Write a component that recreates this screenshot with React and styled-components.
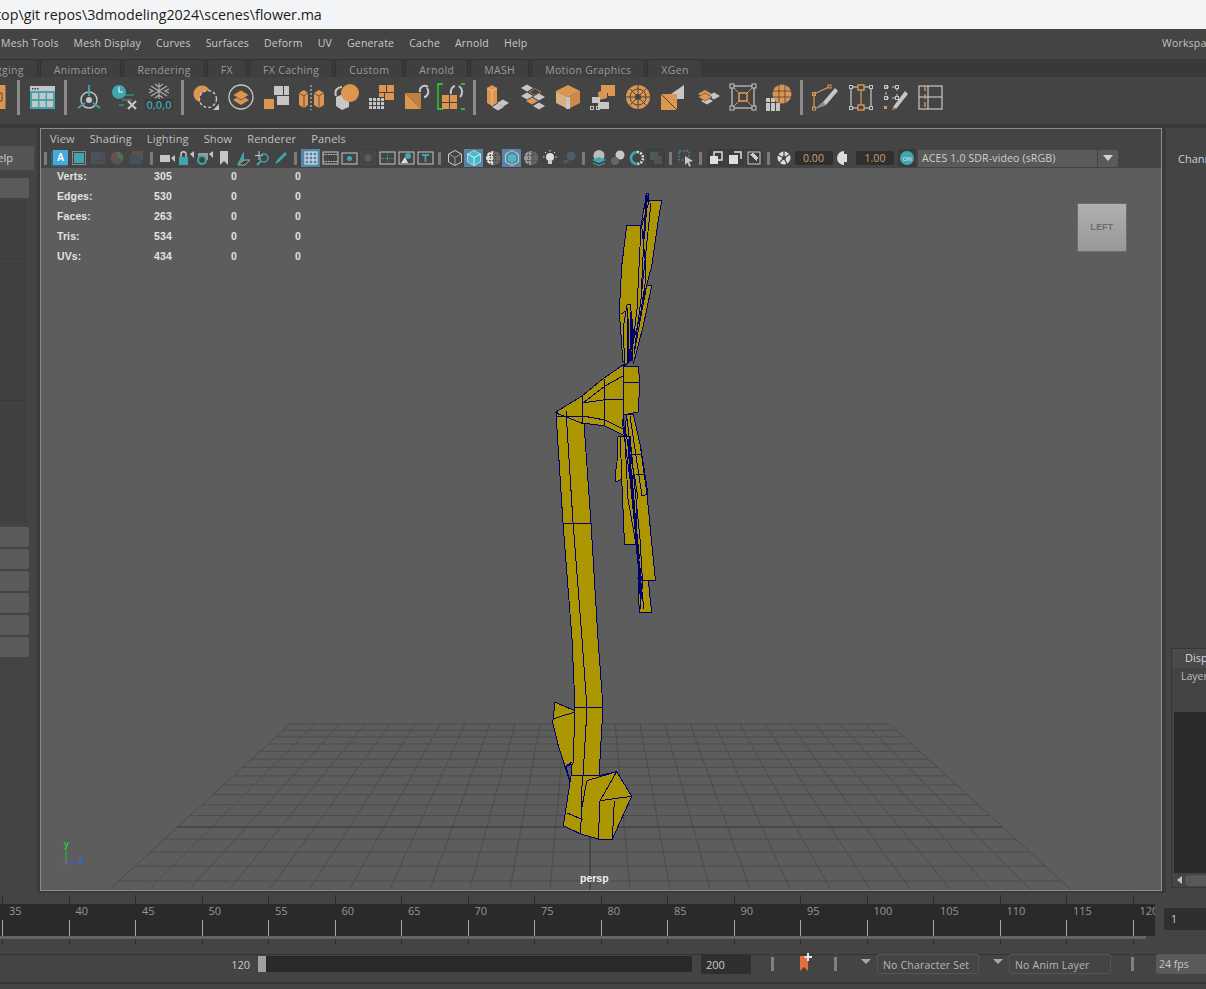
import React from 'react'
import styled, { createGlobalStyle } from 'styled-components'

const O = '#dd9650'
const G = '#c6c6c6'
const T = '#3fa6b0'
const EDGE = '#000070'
const FILL = '#ac9600'

const GlobalStyle = createGlobalStyle`
  html, body { margin: 0; padding: 0; background: #444; }
  * { box-sizing: border-box; }
`

const Page = styled.div`
  width: 1206px;
  height: 989px;
  overflow: hidden;
  display: flex;
  flex-direction: column;
  background: #444;
  color: #c8c8c8;
  font-family: 'Open Sans', 'Noto Sans', sans-serif;
  font-size: 10.5px;
`
const TitleBar = styled.div`
  height: 29px;
  flex: none;
  background: #f3f4f6;
  color: #1c1c1c;
  font-size: 14.3px;
  line-height: 29px;
  white-space: nowrap;
  overflow: hidden;
  span { margin-left: -4px; display: inline-block; }
`
const MenuBar = styled.div`
  height: 30px;
  flex: none;
  display: flex;
  align-items: center;
  gap: 15px;
  padding: 0 0 2px 1px;
  letter-spacing: 0.2px;
  white-space: nowrap;
`
const MenuEnd = styled.span`
  margin-left: auto;
  width: 44px;
  overflow: hidden;
  color: #c0c0c0;
`
const TabRow = styled.div`
  height: 18px;
  flex: none;
  display: flex;
  gap: 2px;
  background: #393939;
  color: #9a9a9a;
  overflow: hidden;
  margin-left: -28px;
`
const Tab = styled.div`
  padding: 1px 13px 0;
  line-height: 18px;
  background: #3f3f3f;
  border: 1px solid #333;
  border-bottom: 0;
  border-radius: 3px 3px 0 0;
  white-space: nowrap;
  letter-spacing: 0.35px;
`
const Shelf = styled.div`
  height: 47px;
  flex: none;
  display: flex;
  align-items: center;
  padding-bottom: 7px;
  background: #444;
`
const ShelfIcon = styled.div`
  width: 35px;
  height: 30px;
  flex: none;
  display: flex;
  align-items: center;
  justify-content: center;
`
const ShelfStub = styled.div`
  width: 12px;
  height: 24px;
  flex: none;
  overflow: hidden;
  svg { display: block; }
`
const ShelfSep = styled.div`
  width: 12px;
  flex: none;
  display: flex;
  justify-content: center;
  &::after { content: ''; width: 3px; height: 35px; background: #8c8c8c; }
`
const Gutter = styled.div`
  height: 4px;
  flex: none;
  background: #393939;
`
const Main = styled.div`
  height: 765px;
  flex: none;
  display: flex;
  background: #3a3a3a;
`
const LeftPanel = styled.div`
  width: 37px;
  flex: none;
  display: flex;
  flex-direction: column;
  background: #444;
`
const LeftTab = styled.div`
  width: 34px;
  height: 24px;
  margin-top: 18px;
  flex: none;
  display: flex;
  justify-content: flex-end;
  padding-right: 21px;
  background: #555;
  color: #d0d0d0;
  font-size: 11px;
  line-height: 24px;
  white-space: nowrap;
  overflow: hidden;
  border-radius: 0 2px 2px 0;
`
const LeftButton = styled.div`
  width: 29px;
  height: 20px;
  flex: none;
  margin-top: ${p => p.$mt || 0}px;
  margin-bottom: 2px;
  background: #5a5a5a;
  border-radius: 0 2px 2px 0;
`
const LeftList = styled.div`
  width: 27px;
  height: 323px;
  flex: none;
  margin: 0 0 4px;
  display: flex;
  flex-direction: column;
  background: #404040;
`
const LeftListPart = styled.div`
  height: ${p => p.$h}px;
  flex: none;
  border-bottom: 1px solid #3a3a3a;
`
const Viewport = styled.div`
  width: 1122px;
  height: 763px;
  flex: none;
  margin-left: 3px;
  border: 1px solid #8c8c8c;
  display: flex;
  flex-direction: column;
`
const PanelMenu = styled.div`
  height: 19px;
  flex: none;
  display: flex;
  align-items: center;
  gap: 15px;
  padding-left: 9px;
  background: #444;
  color: #c0c0c0;
  font-size: 11px;
  letter-spacing: 0.15px;
`
const PanelBar = styled.div`
  height: 20px;
  flex: none;
  display: flex;
  align-items: center;
  background: #444;
`
const PanelIcon = styled.div`
  width: 19px;
  height: 18px;
  flex: none;
  display: flex;
  align-items: center;
  justify-content: center;
  background: ${p => (p.$on ? '#5285a6' : 'transparent')};
`
const PanelSep = styled.div`
  width: ${p => p.$w || 11}px;
  flex: none;
  display: flex;
  justify-content: center;
  &::after { content: ''; width: 3px; height: 13px; background: #7c7c7c; border-radius: 1px; }
`
const NumBox = styled.div`
  width: 38px;
  height: 14px;
  flex: none;
  margin: 0 ${p => p.$mr || 0}px 0 ${p => p.$ml}px;
  background: #2f2f2f;
  color: #d0a060;
  border-radius: 2px;
  text-align: center;
  line-height: 14px;
  font-size: 10.5px;
`
const ColorBox = styled.div`
  width: 179px;
  height: 17px;
  flex: none;
  margin-left: 2px;
  background: #5a5a5a;
  color: #d0d0d0;
  line-height: 17px;
  padding-left: 4px;
  letter-spacing: 0.15px;
  white-space: nowrap;
`
const ColorArrow = styled.div`
  width: 20px;
  height: 17px;
  flex: none;
  margin-left: 1px;
  background: #5a5a5a;
  display: flex;
  align-items: center;
  justify-content: center;
  border-radius: 0 2px 2px 0;
  &::after {
    content: '';
    border-left: 5px solid transparent;
    border-right: 5px solid transparent;
    border-top: 6px solid #d4d4d4;
  }
`
const Scene = styled.div`
  position: relative;
  flex: 1;
  background: #5d5d5d;
  overflow: hidden;
  svg.canvas { display: block; }
`
const Stats = styled.div`
  position: absolute;
  left: 16px;
  top: 0;
  display: grid;
  grid-template-columns: 97px 77px 64px 10px;
  grid-auto-rows: 20px;
  font-family: 'Liberation Sans', Arial, sans-serif;
  font-weight: 700;
  font-size: 10.5px;
  letter-spacing: 0.1px;
  line-height: 17px;
  color: #e2e2e2;
`
const ViewCube = styled.div`
  position: absolute;
  left: 1036px;
  top: 35px;
  width: 50px;
  height: 49px;
  background: linear-gradient(#b0b0b0, #989898);
  border: 1px solid #6c6c6c;
  color: #6a6a6a;
  font-family: 'Liberation Sans', Arial, sans-serif;
  font-weight: 700;
  font-size: 8.5px;
  letter-spacing: 0.4px;
  line-height: 46px;
  text-align: center;
`
const Persp = styled.div`
  position: absolute;
  left: 539px;
  top: 704px;
  font-family: 'Liberation Sans', Arial, sans-serif;
  font-weight: 700;
  font-size: 10.5px;
  color: #f0f0f0;
`
const Axis = styled.svg`
  position: absolute;
  left: 20px;
  top: 671px;
`
const RightPanel = styled.div`
  flex: 1;
  margin-left: 3px;
  background: #444;
  border-left: 1px solid #3a3a3a;
  display: flex;
  flex-direction: column;
  min-width: 0;
`
const Channel = styled.div`
  height: 520px;
  flex: none;
  padding: 23px 0 0 12px;
  color: #cfcfcf;
  font-size: 11px;
  white-space: nowrap;
  overflow: hidden;
`
const LayerFrame = styled.div`
  height: 240px;
  flex: none;
  margin-left: 5px;
  border: 1px solid #383838;
  border-right: 0;
  display: flex;
  flex-direction: column;
  overflow: hidden;
  white-space: nowrap;
`
const LayerTab = styled.div`
  height: 19px;
  flex: none;
  padding: 1px 0 0 13px;
  background: #4a4a4a;
  font-size: 11px;
  color: #d8d8d8;
`
const LayerMenu = styled.div`
  height: 44px;
  flex: none;
  padding: 1px 0 0 9px;
  color: #bcbcbc;
`
const LayerList = styled.div`
  height: 161px;
  flex: none;
  margin-left: 2px;
  background: #2a2a2a;
`
const LayerScroll = styled.div`
  flex: 1;
  display: flex;
  align-items: center;
  padding-left: 5px;
  gap: 3px;
  &::before {
    content: '';
    border-top: 4px solid transparent;
    border-bottom: 4px solid transparent;
    border-right: 5px solid #c0c0c0;
  }
  &::after { content: ''; flex: 1; height: 11px; background: #585858; border-radius: 4px 0 0 4px; }
`
const Timeline = styled.div`
  height: 51px;
  flex: none;
  margin-top: 2px;
  display: flex;
  flex-direction: column;
  position: relative;
  background: #444;
`
const TickRow = styled.div`
  height: ${p => p.$h}px;
  flex: none;
  display: flex;
  padding-left: 2px;
  overflow: hidden;
  width: ${p => p.$w}px;
  background: ${p => p.$bg};
  border-top: ${p => p.$top || 'none'};
`
const TickCell = styled.div`
  width: 66.5px;
  flex: none;
  border-left: 1px solid #2a2a2a;
`
const RulerCell = styled.div`
  width: 66.5px;
  flex: none;
  display: flex;
  flex-direction: column;
  color: #969696;
  font-size: 11px;
  line-height: 14px;
`
const RulerLabel = styled.div`
  height: 16px;
  padding-left: 7px;
`
const RulerTick = styled.div`
  width: 1px;
  height: 16px;
  background: #a8a8a8;
`
const CurrentFrame = styled.div`
  position: absolute;
  left: 1164px;
  top: 13px;
  width: 42px;
  height: 22px;
  background: #2f2f2f;
  border-radius: 2px 0 0 2px;
  padding-left: 7px;
  line-height: 22px;
  color: #c8c8c8;
`
const RangeRow = styled.div`
  height: 30px;
  flex: none;
  margin-top: 8px;
  padding-top: 1px;
  display: flex;
  align-items: flex-start;
  background: #444;
  border-top: 1px solid #333;
  border-bottom: 2px solid #353535;
`
const RangeFill = styled.div`
  width: 258px;
  height: 16px;
  flex: none;
  line-height: 17px;
  text-align: right;
  padding-right: 8px;
  font-size: 11px;
  color: #c8c8c8;
`
const RangeHandle = styled.div`
  width: 8px;
  height: 16px;
  flex: none;
  background: #a0a0a0;
`
const RangeTrack = styled.div`
  width: 426px;
  height: 16px;
  flex: none;
  background: #2a2a2a;
`
const EndField = styled.div`
  width: 50px;
  height: 20px;
  flex: none;
  margin: -2px 20px 0 9px;
  background: #2f2f2f;
  border-radius: 2px;
  padding-left: 5px;
  line-height: 21px;
  font-size: 11px;
`
const Pill = styled.div`
  width: 3px;
  height: 20px;
  flex: none;
  margin: -2px ${p => p.$mr || 0}px 0 ${p => p.$ml || 0}px;
  background: linear-gradient(#444 0, #444 3px, #808080 3px, #808080 17px, #444 17px);
`
const Bookmark = styled.svg`
  flex: none;
  margin: -3px 21px 0 0;
`
const Caret = styled.div`
  width: 0;
  height: 0;
  flex: none;
  margin: 3px 6px 0 ${p => p.$ml}px;
  border-left: 5px solid transparent;
  border-right: 5px solid transparent;
  border-top: 5px solid #a8a8a8;
`
const SetField = styled.div`
  width: 102px;
  height: 20px;
  flex: none;
  margin-top: -2px;
  border: 1px solid #555;
  border-radius: 2px;
  padding-left: 5px;
  line-height: 20px;
  letter-spacing: 0.2px;
  white-space: nowrap;
  color: #b8b8b8;
`
const FpsField = styled.div`
  flex: 1;
  height: 20px;
  margin: -2px 0 0 22px;
  background: #5a5a5a;
  border-radius: 2px 0 0 2px;
  padding-left: 3px;
  line-height: 21px;
  color: #c8c8c8;
`

const Svg = ({ s = 28, children }) => (
  <svg width={s} height={s} viewBox={`0 0 ${s} ${s}`}>
    {children}
  </svg>
)
const P = ({ d, f = O, st = 'none', w = 1, dash }) => (
  <path d={d} fill={f} stroke={st} strokeWidth={w} strokeDasharray={dash} />
)
const Arrow = ({ d }) => <path d={d} fill="none" stroke={G} strokeWidth="2" />
const Dia = ({ x, y, c = G }) => <path d={`M${x - 6} ${y}L${x} ${y - 3.5}L${x + 6} ${y}L${x} ${y + 3.5}Z`} fill={c} />
const Handle = ({ x, y }) => <rect x={x - 1.5} y={y - 1.5} width="3" height="3" fill="none" stroke={G} />

const shelfIcons = [
  <>
    <rect x="2" y="3" width="25" height="23" fill={T} />
    <rect x="2" y="3" width="25" height="5" fill={G} />
    {[4, 6.5, 9].map(x => <rect key={x} x={x} y="5" width="1.5" height="1.5" fill="#444" />)}
    {[4, 11.5, 19].flatMap(x => [10, 18].map(y => <rect key={x + '' + y} x={x} y={y} width="6" height="6" fill={G} />))}
  </>,
  <>
    <circle cx="14" cy="17" r="8" fill="none" stroke={G} strokeWidth="1.4" />
    <circle cx="14" cy="17" r="3" fill={G} />
    <P d="M14 2V13M3 25L10 20M25 25L18 20" st={T} w="1.8" f="none" />
  </>,
  <>
    <circle cx="9" cy="9" r="7" fill={T} />
    <P d="M9 4V9H13" f="none" st="#eee" w="1.2" />
    <P d="M15 12H24M12 17H22M9 22H14" f="none" st={T} w="1.2" />
    <P d="M18 18L26 26M26 18L18 26" f="none" st={G} w="2.2" />
  </>,
  <>
    <P d="M14 0V16M6 3L22 13M22 3L6 13M10 1L14 4L18 1M10 15L14 12L18 15M4 6L8 8L4 10M24 6L20 8L24 10" f="none" st="#b0b0b0" w="1.1" />
    <rect x="0" y="16" width="28" height="11" fill="#3a3a3a" />
    <text x="14" y="25.5" fill={T} fontSize="11" fontWeight="600" textAnchor="middle" fontFamily="'Open Sans', sans-serif">0,0,0</text>
  </>,
  <>
    <circle cx="10" cy="11" r="8.5" fill={O} />
    <circle cx="16" cy="16" r="8.5" fill="#444" stroke={G} strokeWidth="1.4" strokeDasharray="3 2" />
    <P d="M21 27H27V21Z" f={G} />
  </>,
  <>
    <circle cx="14" cy="14" r="12" fill="none" stroke={G} strokeWidth="1.3" />
    <P d="M6 17L14 12L22 17L14 22Z" />
    <P d="M6 12L14 7L22 12L14 17Z" st="#444" w=".7" />
  </>,
  <>
    <rect x="12" y="3" width="9" height="9" fill={G} />
    <rect x="22" y="3" width="5" height="9" fill={G} />
    <rect x="15" y="13" width="12" height="9" fill={G} />
    <rect x="2" y="16" width="10" height="10" fill={O} />
  </>,
  <>
    <P d="M2 10L7 7L11 10V22L7 25L2 22Z" />
    <P d="M17 10L22 7L27 10V22L22 25L17 22Z" />
    <P d="M2 10L7 13V25M11 10L7 13M17 10L22 13V25M27 10L22 13" f="none" st="#444" w=".8" />
    <P d="M14 2V27" f="none" st="#ddd" dash="2 2" />
  </>,
  <>
    <P d="M4 14L11 11L17 17V24L10 27L4 23Z" f={G} />
    <circle cx="18" cy="10" r="9" fill={O} />
    <Arrow d="M4 13C2 7 6 4 10 4" />
  </>,
  <>
    {[2, 6, 10, 14].flatMap(x => [15, 19, 23].map(y => <rect key={x + '-' + y} x={x} y={y} width="3" height="3" fill={G} />))}
    <rect x="12" y="2" width="7" height="7" fill={O} />
    <rect x="20" y="2" width="7" height="7" fill={O} />
    <rect x="18" y="10" width="9" height="7" fill={O} />
    <rect x="12" y="10" width="5" height="4" fill={O} />
  </>,
  <>
    <P d="M3 10L19 26H3Z" />
    <P d="M3 10L19 10L19 26Z" f="#c08040" />
    <Arrow d="M18 9C17 4 22 1 26 4" />
    <Arrow d="M25 5C28 9 25 14 22 14" />
  </>,
  <>
    <P d="M6 1H1V26H6M24 1H29V26H24" f="none" st="#22e322" w="1.3" />
    <rect x="5" y="12" width="7" height="7" fill={O} />
    <rect x="13" y="12" width="7" height="7" fill={O} />
    <rect x="5" y="20" width="7" height="6" fill={O} />
    <rect x="13" y="20" width="7" height="6" fill={O} />
    <Arrow d="M14 11C13 6 16 3 18 3" />
    <Arrow d="M22 3C26 6 26 11 23 14" />
  </>,
  <>
    <P d="M3 5L8 2L13 5V20L8 23L3 20Z" />
    <P d="M3 5L8 8L13 5M8 8V23" f="none" st="#f0c090" />
    <Dia x={19} y={20} />
    <Dia x={14} y={24} />
  </>,
  <>
    <Dia x={8} y={5} />
    <P d="M10 9L16 5.5L22 9L16 12.5Z" f="none" st={O} dash="1.5 1" />
    <Dia x={8} y={13} />
    <Dia x={20} y={14} />
    <Dia x={13} y={18} c={O} />
    <Dia x={20} y={23} />
  </>,
  <>
    <P d="M14 2L26 8L14 14L2 8Z" />
    <P d="M2 8L14 14V26L2 20Z" f="#d8b080" />
    <P d="M26 8L14 14V26L26 20Z" f="#d08a48" />
    <P d="M12 14H16V26H12Z" f={G} />
  </>,
  <>
    <P d="M12 2H26V13H19V10H12Z" />
    <P d="M9 9L18 7V15L10 17Z" />
    <rect x="3" y="14" width="8" height="6" fill={G} />
    <rect x="9" y="19" width="11" height="7" fill={G} />
    <Handle x={3} y={25} />
    <Handle x={9} y={25} />
    <Handle x={5} y={18} />
  </>,
  <>
    <circle cx="14" cy="14" r="12" fill={O} />
    <circle cx="14" cy="14" r="8" fill="none" stroke="#444" strokeWidth="1" />
    <circle cx="14" cy="14" r="3" fill="#444" />
    <P d="M14 2V26M2 14H26M5.5 5.5L22.5 22.5M22.5 5.5L5.5 22.5" f="none" st="#444" w="1" />
  </>,
  <>
    <P d="M12 11L25 2V16H12Z" f={G} />
    <rect x="2" y="11" width="16" height="16" fill={O} />
    <P d="M2 11L18 27" f="none" st="#444" />
  </>,
  <>
    <Dia x={20} y={13} />
    <Dia x={13} y={18} />
    <P d="M4 11L11 7L18 11L11 15Z" />
    <P d="M4 14L11 10L18 14L11 18Z" st="#444" w=".6" />
  </>,
  <>
    <rect x="3" y="3" width="22" height="22" fill="none" stroke={G} strokeWidth="1.2" />
    <rect x="10" y="10" width="8" height="8" fill="none" stroke={O} strokeWidth="1.6" />
    <P d="M4 4L10 10M24 4L18 10M4 24L10 18M24 24L18 18" f="none" st={O} />
    {[[3, 3], [25, 3], [3, 25], [25, 25]].map(([x, y]) => <rect key={x + '' + y} x={x - 2} y={y - 2} width="4" height="4" fill="#444" stroke={G} />)}
  </>,
  <>
    {[2, 7, 12].flatMap(x => [15, 20, 24].map(y => <rect key={x + '-' + y} x={x} y={y} width="4" height="4" fill={G} />))}
    <circle cx="18" cy="11" r="9.5" fill={O} />
    <P d="M8.5 8H27M8.5 14H27M15 2V20M21 2V20" f="none" st="#444" w=".8" />
  </>,
  <>
    <P d="M3 11L18 4M3 11V25" f="none" st={O} w="1.2" />
    <rect x="1.5" y="9.5" width="3" height="3" fill="none" stroke={O} />
    <rect x="17" y="2" width="3" height="3" fill="none" stroke={O} />
    <rect x="1.5" y="24" width="3" height="3" fill="none" stroke={O} />
    <P d="M4 26L12 19L24 5L27 8L15 22Z" f={G} />
    <P d="M4 26L12 19L15 22Z" f="#888" />
  </>,
  <>
    <rect x="5" y="4" width="20" height="21" fill="none" stroke={G} strokeWidth="1.2" />
    <P d="M15 6V22" f="none" st={O} w="1.2" />
    <rect x="12" y="2" width="6" height="5" fill="#444" stroke={O} strokeWidth="1.4" />
    <rect x="12" y="22" width="6" height="5" fill="#444" stroke={O} strokeWidth="1.4" />
    {[[5, 4], [25, 4], [5, 25], [25, 25]].map(([x, y]) => <rect key={x + '' + y} x={x - 1.5} y={y - 1.5} width="3" height="3" fill="#444" stroke={G} />)}
  </>,
  <>
    <rect x="5" y="4" width="11" height="11" fill="none" stroke={G} strokeDasharray="3 3" />
    {[[5, 4], [16, 4], [5, 15], [16, 15]].map(([x, y]) => <Handle key={x + '' + y} x={x} y={y} />)}
    <rect x="3" y="23" width="3" height="3" fill={O} />
    <P d="M12 24L24 8L27 11L15 26Z" f={G} />
    <P d="M12 24L14 27H11Z" f="#888" />
  </>,
  <>
    <rect x="3" y="3" width="23" height="23" fill="none" stroke={G} strokeWidth="1.2" />
    <P d="M3 14H26" f="none" st={G} w="1.2" />
    <P d="M9 3V26" f="none" st={O} w="1.4" dash="5 3" />
    <P d="M12 3V26" f="none" st={G} w="1.2" />
  </>,
]

const panelA = [
  <>
    <rect x="2" y="1" width="15" height="15" fill="#45abdc" />
    <P d="M1 2V17H16" f="none" st="#2f7aa0" />
    <text x="9.5" y="12" fill="#fff" fontSize="10" fontWeight="700" textAnchor="middle" fontFamily="'Liberation Sans', sans-serif">A</text>
  </>,
  <>
    <rect x="4" y="4" width="10" height="10" fill={T} />
    <rect x="2.5" y="2.5" width="13" height="13" fill="none" stroke="#888" />
  </>,
  <>
    <rect x="2" y="3" width="14" height="12" fill="#4a5158" />
    <P d="M5 12H13V5" f="none" st="#3a4046" dash="1 1" />
  </>,
  <>
    <circle cx="9" cy="9" r="6.5" fill="#555" />
    <P d="M9 2.5A6.5 6.5 0 0 1 15 11L9 9Z" f="#5a6a55" />
    <P d="M9 2.5A6.5 6.5 0 0 0 3 11L9 9Z" f="#6a5050" />
  </>,
  <>
    <rect x="5" y="2" width="11" height="9" fill="#5a5248" />
    <rect x="2" y="6" width="12" height="9" fill="#455058" />
  </>,
]
const panelB = [
  <>
    <rect x="2" y="6" width="10" height="7" fill={G} />
    <P d="M13 9L17 6V13Z" f={G} />
  </>,
  <>
    <rect x="2" y="8" width="9" height="8" fill={T} />
    <P d="M4 8V5C4 2 9 2 9 5V8" f="none" st="#ccc" w="1.4" />
    <P d="M13 5L17 2V9Z" f={G} />
  </>,
  <>
    <rect x="2" y="4" width="10" height="7" fill="#999" />
    <circle cx="6" cy="11" r="4" fill="#444" stroke={T} strokeWidth="2" />
    <P d="M13 5L17 2V9Z" f={G} />
  </>,
  <P d="M5 2H13V16L9 12L5 16Z" f={G} />,
  <>
    <P d="M10 2V11L3 16Z" f={T} />
    <P d="M4 16L10 11H16L11 16Z" f="none" st="#aaa" />
  </>,
  <>
    <P d="M6 2V11M2 6.5H10" f="none" st={G} />
    <circle cx="11" cy="9" r="4" fill="none" stroke={T} strokeWidth="1.5" />
    <P d="M8 12L4 16" f="none" st={T} w="2" />
  </>,
  <P d="M3 15L5 11L13 3L15 5L7 13Z" f={T} />,
]
const panelC = [
  { on: true, el: <><rect x="3" y="3" width="12" height="12" fill="none" stroke="#eee" /><P d="M7 3V15M11 3V15M3 7H15M3 11H15" f="none" st="#eee" /></> },
  { el: <><rect x="2" y="3" width="15" height="12" fill="none" stroke={G} /><P d="M2 5.5H17M2 12.5H17" f="none" st={G} dash="1.5 1" /></> },
  { el: <><rect x="2" y="4" width="15" height="11" fill="none" stroke={G} /><circle cx="9.5" cy="9.5" r="2.5" fill={T} /></> },
  { el: <><rect x="0" y="0" width="18" height="18" fill="#464646" stroke="#383838" /><circle cx="9" cy="9" r="3.5" fill="#5c5c5c" /></> },
  { el: <><rect x="2" y="3" width="15" height="12" fill="none" stroke={G} /><P d="M9.5 4V15M3 9.5H16" f="none" st={T} dash="1 1" /></> },
  { el: <><rect x="2" y="3" width="15" height="12" fill="none" stroke={G} /><circle cx="11" cy="7" r="3" fill={T} /><P d="M4 14L8 8L11 14Z" f="#ddd" /></> },
  { el: <><rect x="2" y="3" width="15" height="12" fill="none" stroke={G} /><P d="M6 6H13M9.5 6V13" f="none" st={T} w="1.8" /></> },
]
const cube = c => (
  <>
    <P d="M9 1.5L15.5 5V13L9 16.5L2.5 13V5Z" f={c || 'none'} st="#ccc" />
    <P d="M2.5 5L9 8.5L15.5 5M9 8.5V16.5" f="none" st={c ? '#d8f4f4' : '#999'} />
  </>
)
const checkerBall = half => (
  <>
    <circle cx="9" cy="9" r="7" fill={half ? '#ddd' : '#999'} />
    <P d="M9 2A7 7 0 0 1 9 16Z" f="#666" />
    <P d="M2 6.5H16M2 11.5H16M6.5 2V16M11.5 2V16" f="none" st="#4a4a4a" w="1.2" dash="1.5 1.5" />
  </>
)
const panelD = [
  { el: cube() },
  { on: true, el: cube('#45bccb') },
  { el: checkerBall(true) },
  {
    on: true,
    el: (
      <>
        {cube()}
        <P d="M9 5L13 7V11.5L9 13.5L5 11.5V7Z" f="#50b8c4" />
      </>
    ),
  },
  { el: checkerBall(false) },
  { el: <><circle cx="9" cy="8" r="4" fill="#ddd" /><rect x="7" y="12" width="4" height="3" fill="#ccc" /><P d="M9 1V2.5M2 8H3.5M14.5 8H16M4 3L5 4M14 3L13 4" f="none" st="#ddd" /></> },
  { el: <><circle cx="11" cy="7" r="4.5" fill="#4e5c66" /><P d="M3 12L8 10L9 13L4 15Z" f="#555" /></> },
]
const panelE = [
  <>
    <circle cx="9" cy="6.5" r="5.5" fill="#bbb" />
    <P d="M2 11L9 8L16 11L9 14Z" f={T} />
    <P d="M3 14L9 16.5L15 14" f="none" st={T} />
  </>,
  <>
    <circle cx="11" cy="6" r="4.5" fill="#c8c8c8" />
    <circle cx="6" cy="12" r="4" fill="#666" />
  </>,
  <>
    <P d="M9 3A6 6 0 0 0 9 15" f="none" st={T} w="2.6" />
    <P d="M9 3A6 6 0 0 1 9 15" f="none" st="#ddd" w="2.6" dash="2 1.2" />
  </>,
  <>
    <rect x="0" y="0" width="18" height="18" fill="#404040" stroke="#383838" />
    <rect x="3" y="3" width="8" height="8" fill="#4e5a5c" />
    <rect x="7" y="7" width="8" height="8" fill="#47565a" />
  </>,
]
const overlap = (a, b) => (
  <>
    <rect x="0" y="0" width="18" height="18" fill="#3c3c3c" />
    {a}
    {b}
  </>
)
const panelF = [
  overlap(<rect x="7" y="3" width="8" height="8" fill="none" stroke="#ddd" strokeWidth="1.5" />, <rect x="3" y="7" width="8" height="8" fill="#ddd" />),
  overlap(<P d="M8 3H15V10" f="none" st="#ddd" w="1.5" />, <rect x="3" y="6" width="9" height="9" fill="#ddd" />),
  overlap(<rect x="3" y="3" width="12" height="12" fill="none" stroke="#ccc" />, <P d="M6 6L11 11L13 9L8 4Z M5 5L12 12" f="#ccc" st="#ccc" />),
]

const PanelGlyph = ({ children, on }) => (
  <PanelIcon $on={on}>
    <svg width="18" height="18" viewBox="0 0 18 18">{children}</svg>
  </PanelIcon>
)

const stats = [
  ['Verts:', 305],
  ['Edges:', 530],
  ['Faces:', 263],
  ['Tris:', 534],
  ['UVs:', 434],
]

const gridRange = Array.from({ length: 25 }, (_, i) => i - 12)
const px = (x, z) => 590 + (x * 1100) / (32 + z)
const py = z => 450 + 12096 / (32 + z)

const GroundGrid = () => (
  <g fill="none">
    {gridRange.map(v => (
      <g key={v} stroke={v === 0 ? '#424242' : '#4c4c4c'} strokeWidth={v === 0 ? 1.6 : 1}>
        <line x1={px(-12, v)} y1={py(v)} x2={px(12, v)} y2={py(v)} />
        <line x1={px(v, 12)} y1={py(12)} x2={px(v, -12)} y2={py(-12)} />
      </g>
    ))}
  </g>
)

const polys = [
  // top petals
  '646.7,194 649,194 647.3,227 643.3,260 641.7,223',
  '649.3,201.7 661.7,201.7 658,223 651.7,267 643,300 640,280 641.7,226.7',
  '626.7,226.7 641.7,226.7 645,260 645,285 636,345 633,360 623,363 619.3,313 621.7,267',
  '646.7,286.7 651.7,286.7 643.3,326.7 633.3,365 631.7,346.7 641.7,313',
  '627,306 630,305 633,327 631.7,360 625,366.7 623,330',
  // lower petals
  '638,580 648.3,581.7 651.7,613.3 639.3,613.3',
  '626.7,415 633.3,415 640,445 646.7,493 655,577 655.7,581.7 641.7,581.7 635,533 630,500 625,433',
  '618,438 630,437 636,500 637,545 624.5,545 623,510 621.7,480 616,483 615,478 617,463',
  // neck and head
  '556,413 582,397 604,379 623,366 623,416 625,437 605,427 583,424 566,420',
  '623,367 638,367 640,383 638,413 623,416',
  // stem and base
  '556,414 563,524 572,640 575,708 572,765 571,777 599,777 603,708 598,640 591,524 584,425',
  '555,703.3 575,711.7 573,765 566,767 570,783 558.3,746.7 552.7,723.3',
  '571,776.7 563.3,826.7 580.7,835 598.3,840 612.3,840 631.7,797.3 616.7,772.7 599,776.7',
]
const edges = [
  'M641 227L637 310L631 362', 'M646 196L641 300L634 355', 'M651 204L642 290', 'M627 308L628 365', 'M630 312L631 362',
  'M645 295L635 350', 'M628 320L628 362', 'M621 315L626 312',
  'M556 417L583 417L605 421L625 431', 'M582 397L583 424', 'M604 379L605 427', 'M582 404L605 400.7L623 400.7', 'M583 404L605 387L623 377',
  'M623 383H640',
  'M627 420L633 470L640 540L643 590', 'M622 420L630 480L637 550L641 610', 'M625 430L635 480L638 500', 'M630 417L642 497L648 495L641 450',
  'M625 440L628 500L636 545', 'M629 440L632 490', 'M630 455L641 455', 'M636 475L644 475',
  'M635 533L644 610', 'M620 438L622 480',
  'M566 412L573 523L582 640L587 710L583 777', 'M563 524L591 525', 'M575 708L603 709',
  'M552.7 720L575 713', 'M566 767L572 763',
  'M582.3 776.7L580.7 835', 'M567.3 814L582.7 820.7', 'M586.7 781.7L581.7 810', 'M586.7 781.7L616.7 772.7',
  'M616.7 772.7L600 801.7', 'M600 801.7L631.7 797.3', 'M600 801.7L598.3 840', 'M614.3 802.3L612.3 840', 'M571 776L599 777',
]
const dense = [
  'M632 320L630 362', 'M634 330L628 364', 'M647 196L644 240', 'M628 440L631 480', 'M631 470L635 520', 'M633 500L639 560', 'M636 540L642 600',
]

const frames = Array.from({ length: 18 }, (_, i) => 35 + i * 5)

const App = () => (
  <Page>
    <GlobalStyle />
    <TitleBar>
      <span>top\git repos\3dmodeling2024\scenes\flower.ma</span>
    </TitleBar>
    <MenuBar>
      {['Mesh Tools', 'Mesh Display', 'Curves', 'Surfaces', 'Deform', 'UV', 'Generate', 'Cache', 'Arnold', 'Help'].map(m => (
        <span key={m}>{m}</span>
      ))}
      <MenuEnd>Workspace</MenuEnd>
    </MenuBar>
    <TabRow>
      {['Rigging', 'Animation', 'Rendering', 'FX', 'FX Caching', 'Custom', 'Arnold', 'MASH', 'Motion Graphics', 'XGen'].map(t => (
        <Tab key={t}>{t}</Tab>
      ))}
    </TabRow>
    <Shelf>
      <ShelfStub>
        <svg width="12" height="24" viewBox="0 0 12 24">
          <rect x="-12" y="0" width="17.5" height="24" fill={O} />
          <path d="M-2 8H2V16H-2" fill="none" stroke="#444" />
        </svg>
      </ShelfStub>
      <ShelfSep />
      <ShelfIcon><Svg>{shelfIcons[0]}</Svg></ShelfIcon>
      <ShelfSep />
      {shelfIcons.slice(1, 4).map((el, i) => <ShelfIcon key={i}><Svg>{el}</Svg></ShelfIcon>)}
      <ShelfSep />
      {shelfIcons.slice(4, 12).map((el, i) => <ShelfIcon key={i}><Svg>{el}</Svg></ShelfIcon>)}
      <ShelfSep />
      {shelfIcons.slice(12, 21).map((el, i) => <ShelfIcon key={i}><Svg>{el}</Svg></ShelfIcon>)}
      <ShelfSep />
      {shelfIcons.slice(21).map((el, i) => <ShelfIcon key={i}><Svg>{el}</Svg></ShelfIcon>)}
    </Shelf>
    <Gutter />
    <Main>
      <LeftPanel>
        <LeftTab>Help</LeftTab>
        <LeftButton $mt={8} />
        <LeftList>
          <LeftListPart $h={59} />
          <LeftListPart $h={142} />
        </LeftList>
        {[0, 1, 2, 3, 4, 5].map(i => <LeftButton key={i} />)}
      </LeftPanel>
      <Viewport>
        <PanelMenu>
          {['View', 'Shading', 'Lighting', 'Show', 'Renderer', 'Panels'].map(m => <span key={m}>{m}</span>)}
        </PanelMenu>
        <PanelBar>
          <PanelSep $w={9} />
          {panelA.map((el, i) => <PanelGlyph key={i}>{el}</PanelGlyph>)}
          <PanelSep $w={12} />
          {panelB.map((el, i) => <PanelGlyph key={i}>{el}</PanelGlyph>)}
          <PanelSep />
          {panelC.map((it, i) => <PanelGlyph key={i} on={it.on}>{it.el}</PanelGlyph>)}
          <PanelSep />
          {panelD.map((it, i) => <PanelGlyph key={i} on={it.on}>{it.el}</PanelGlyph>)}
          <PanelSep />
          {panelE.map((el, i) => <PanelGlyph key={i}>{el}</PanelGlyph>)}
          <PanelSep />
          <PanelGlyph>
            <rect x="2" y="2" width="10" height="9" fill="none" stroke={T} strokeDasharray="2 1.5" />
            <path d="M8 7L16 12L12 13L14 17L12 17.5L10.5 13.5L8 16Z" fill={G} />
          </PanelGlyph>
          <PanelSep />
          {panelF.map((el, i) => <PanelGlyph key={i}>{el}</PanelGlyph>)}
          <PanelSep />
          <PanelGlyph>
            <circle cx="9" cy="9" r="6.5" fill="#ddd" />
            <path d="M9 9L15 5M9 9L9 2.5M9 9L3 6M9 9L4 14M9 9L12 15" stroke="#444" strokeWidth="1.2" />
            <circle cx="9" cy="9" r="2" fill="#444" />
          </PanelGlyph>
          <NumBox $ml={1.5}>0.00</NumBox>
          <PanelGlyph>
            <path d="M11 2A7 7 0 0 0 11 16Z" fill="#ddd" />
            <rect x="11" y="5" width="3" height="8" fill="#ddd" />
          </PanelGlyph>
          <NumBox $ml={4.5} $mr={3}>1.00</NumBox>
          <PanelGlyph>
            <rect x="0" y="0" width="18" height="18" fill="#3a3a3a" />
            <circle cx="9" cy="9" r="7" fill={T} />
            <text x="9" y="11.5" fill="#e8e8e8" fontSize="6" textAnchor="middle" fontFamily="'Liberation Sans', sans-serif">ON</text>
          </PanelGlyph>
          <ColorBox>ACES 1.0 SDR-video (sRGB)</ColorBox>
          <ColorArrow />
        </PanelBar>
        <Scene>
          <svg className="canvas" width="1120" height="722" viewBox="41 169 1120 722">
            <GroundGrid />
            <g shapeRendering="crispEdges">
              {polys.map((pts, i) => (
                <polygon key={i} points={pts} fill={FILL} stroke={EDGE} strokeWidth="1" />
              ))}
              <g fill="none" stroke={EDGE} strokeWidth="1">
                {edges.map((d, i) => <path key={i} d={d} />)}
              </g>
              <g fill="none" stroke={EDGE} strokeWidth="2">
                {dense.map((d, i) => <path key={i} d={d} />)}
              </g>
            </g>
          </svg>
          <Stats>
            {stats.flatMap(([k, v]) => [
              <span key={k}>{k}</span>,
              <span key={k + 'v'}>{v}</span>,
              <span key={k + 'a'}>0</span>,
              <span key={k + 'b'}>0</span>,
            ])}
          </Stats>
          <ViewCube>LEFT</ViewCube>
          <Axis width="28" height="28" viewBox="0 0 28 28">
            <path d="M5 24V10" stroke="#22c040" strokeWidth="1" />
            <path d="M5 24H17" stroke="#3060e0" strokeWidth="1" />
            <path d="M5 24L2 26" stroke="#e03030" strokeWidth="1.6" />
            <text x="3" y="8" fontSize="9" fontWeight="700" fill="#22d040" fontFamily="'Liberation Sans', sans-serif">y</text>
            <text x="18" y="24" fontSize="9" fontWeight="700" fill="#3060f0" fontFamily="'Liberation Sans', sans-serif">z</text>
          </Axis>
          <Persp>persp</Persp>
        </Scene>
      </Viewport>
      <RightPanel>
        <Channel>Channel Box</Channel>
        <LayerFrame>
          <LayerTab>Display</LayerTab>
          <LayerMenu>Layers</LayerMenu>
          <LayerList />
          <LayerScroll />
        </LayerFrame>
      </RightPanel>
    </Main>
    <Timeline>
      <TickRow $h={9} $w={1150} $bg="#444">
        {frames.map(f => <TickCell key={f} />)}
      </TickRow>
      <TickRow $h={32} $w={1155} $bg="#2a2a2a">
        {frames.map(f => (
          <RulerCell key={f}>
            <RulerLabel>{f}</RulerLabel>
            <RulerTick />
          </RulerCell>
        ))}
      </TickRow>
      <TickRow $h={8} $w={1146} $bg="#444" $top="3px solid #666">
        {frames.map(f => <TickCell key={f} />)}
      </TickRow>
      <CurrentFrame>1</CurrentFrame>
    </Timeline>
    <RangeRow>
      <RangeFill>120</RangeFill>
      <RangeHandle />
      <RangeTrack />
      <EndField>200</EndField>
      <Pill $mr={25} />
      <Bookmark width="14" height="20" viewBox="0 0 14 20">
        <path d="M1 3H9V18L5 14L1 18Z" fill="#e0703c" />
        <path d="M9 0V8M5.5 4H13" stroke="#e8e8e8" strokeWidth="2" />
      </Bookmark>
      <Pill />
      <Caret $ml={24} />
      <SetField>No Character Set</SetField>
      <Caret $ml={14} />
      <SetField>No Anim Layer</SetField>
      <Pill $ml={20} />
      <FpsField>24 fps</FpsField>
    </RangeRow>
  </Page>
)

export default App
